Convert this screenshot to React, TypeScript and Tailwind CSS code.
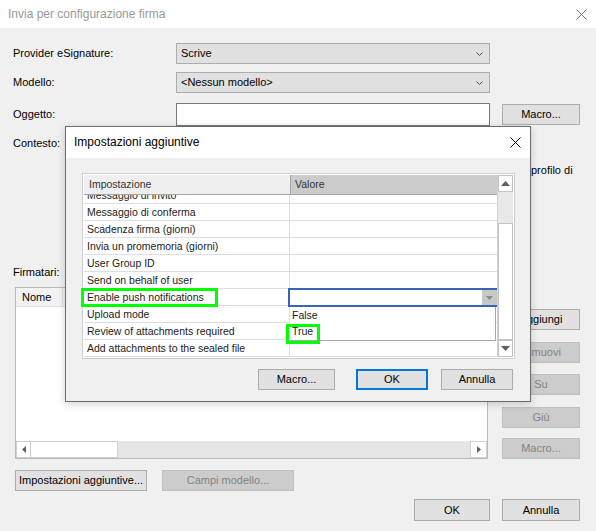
import React from "react";

function CloseX({ color }: { color: string }) {
  return (
    <svg width="11" height="11" viewBox="0 0 11 11">
      <path d="M0.5 0.5 L10.5 10.5 M10.5 0.5 L0.5 10.5" stroke={color} strokeWidth="1" fill="none" />
    </svg>
  );
}

function Tri({ dir }: { dir: "up" | "down" | "left" | "right" }) {
  if (dir === "up")
    return (
      <svg width="9" height="5" viewBox="0 0 9 5">
        <polygon points="0,5 4.5,0 9,5" fill="#606060" />
      </svg>
    );
  if (dir === "down")
    return (
      <svg width="9" height="5" viewBox="0 0 9 5">
        <polygon points="0,0 4.5,5 9,0" fill="#606060" />
      </svg>
    );
  if (dir === "left")
    return (
      <svg width="4" height="7" viewBox="0 0 4 7">
        <polygon points="4,0 0,3.5 4,7" fill="#606060" />
      </svg>
    );
  return (
    <svg width="4" height="7" viewBox="0 0 4 7">
      <polygon points="0,0 4,3.5 0,7" fill="#606060" />
    </svg>
  );
}

function Btn({
  children,
  className = "",
  disabled = false,
  primary = false,
}: {
  children: React.ReactNode;
  className?: string;
  disabled?: boolean;
  primary?: boolean;
}) {
  const look = disabled
    ? "bg-[#cccccc] border border-[#bfbfbf] text-[#838383]"
    : primary
    ? "bg-[#e1e1e1] border-2 border-[#0078d7] text-black"
    : "bg-[#e1e1e1] border border-[#adadad] text-black";
  return (
    <div className={`h-[21px] flex items-center justify-center shrink-0 whitespace-nowrap ${look} ${className}`}>
      {children}
    </div>
  );
}

function Combo({ text }: { text: string }) {
  return (
    <div className="w-[314px] h-[21px] bg-[#e1e1e1] border border-[#adadad] flex items-center justify-between pl-[4px] pr-[6px]">
      <span>{text}</span>
      <svg width="7" height="4" viewBox="0 0 7 4">
        <path d="M0.5 0.5 L3.5 3.5 L6.5 0.5" stroke="#4a4a4a" strokeWidth="1" fill="none" />
      </svg>
    </div>
  );
}

const rows = [
  "Messaggio di conferma",
  "Scadenza firma (giorni)",
  "Invia un promemoria (giorni)",
  "User Group ID",
  "Send on behalf of user",
  "Enable push notifications",
  "Upload mode",
  "Review of attachments required",
  "Add attachments to the sealed file",
];

function GridRow({ text }: { text: string }) {
  const isPush = text === "Enable push notifications";
  return (
    <div className="h-[17px] flex border-b border-[#dedede] relative shrink-0">
      <div className="w-[206px] border-r border-[#dedede] pl-[3px] flex items-center relative">
        {text}
        {isPush && (
          <div className="absolute left-[-3px] top-[-1px] w-[137px] h-[19px] border-[3px] border-[#00ff00]" />
        )}
      </div>
      <div className="flex-1 relative">
        {isPush && (
          <>
            <div className="absolute left-[-2px] top-[-1px] w-[209px] h-[19px] border-y-2 border-l-2 border-[#3466b3] bg-white flex justify-end z-10">
              <div className="w-[15px] bg-[#c8c8c8] flex items-center justify-center">
                <svg width="7" height="4" viewBox="0 0 7 4">
                  <polygon points="0,0 3.5,4 7,0" fill="#8a8a8a" />
                </svg>
              </div>
            </div>
            <div className="absolute left-0 top-[18px] w-[206px] h-[34px] bg-white border-r border-b border-[#a8a8a8] z-10 flex flex-col">
              <div className="h-[17px] pl-[2px] flex items-center">False</div>
              <div className="h-[17px] pl-[2px] flex items-center relative">
                True
                <div className="absolute left-[-4px] top-0 w-[34px] h-[20px] border-[3px] border-[#00ff00]" />
              </div>
            </div>
          </>
        )}
      </div>
    </div>
  );
}

export default function App() {
  return (
    <div className="relative w-[596px] h-[531px] overflow-hidden bg-[#f0f0f0] text-[11px] leading-[13px] text-black font-['Liberation_Sans',Arial,sans-serif]">
      {/* title bar */}
      <div className="h-[28px] bg-white flex items-center justify-between pl-[8px] pr-[9px]">
        <span className="text-[12px] text-[#999999]">Invia per configurazione firma</span>
        <CloseX color="#7a7a7a" />
      </div>

      <div className="pl-[13px] pr-[16px] pt-[15px]">
        <div className="flex items-center h-[21px]">
          <span className="w-[163px] shrink-0">Provider eSignature:</span>
          <Combo text="Scrive" />
        </div>
        <div className="flex items-center h-[21px] mt-[8px]">
          <span className="w-[163px] shrink-0">Modello:</span>
          <Combo text="<Nessun modello>" />
        </div>
        <div className="flex items-center h-[23px] mt-[10px]">
          <span className="w-[163px] shrink-0">Oggetto:</span>
          <div className="w-[314px] h-[23px] bg-white border border-[#7a7a7a]" />
          <Btn className="ml-[12px] w-[78px]">Macro...</Btn>
        </div>
        <div className="flex items-start h-[123px] mt-[10px]">
          <span className="w-[163px] shrink-0 h-[14px] leading-[14px]">Contesto:</span>
          <div className="w-[314px] h-[110px] bg-white border border-[#7a7a7a] mt-[-3px] shrink-0" />
          <div className="ml-[12px] w-[78px] pl-[29px] pt-[27px] whitespace-nowrap leading-[14px]">profilo di</div>
        </div>
        <div className="mt-[6px] h-[14px] leading-[14px]">Firmatari:</div>

        <div className="mt-[8px] flex items-start">
          <div className="ml-[2px] w-[473px] h-[172px] border border-[#b9b9b9] bg-white flex flex-col">
            <div className="h-[19px] flex bg-[#f2f2f2] border-b border-[#e0e0e0] shrink-0">
              <div className="w-[47px] border-r border-[#e0e0e0] pl-[6px] flex items-center">Nome</div>
            </div>
            <div className="flex-1" />
            <div className="h-[17px] flex shrink-0">
              <div className="w-[15px] bg-white border border-[#d0d0d0] flex items-center justify-center">
                <Tri dir="left" />
              </div>
              <div className="w-[87px] bg-white border-y border-r border-[#d0d0d0]" />
              <div className="flex-1 bg-[#e6e6e6]" />
              <div className="w-[17px] bg-white border border-[#d0d0d0] flex items-center justify-center">
                <Tri dir="right" />
              </div>
            </div>
          </div>
          <div className="ml-[14px] w-[78px] flex flex-col pt-[22px]">
            <Btn className="w-[78px]">Aggiungi</Btn>
            <Btn className="w-[78px] mt-[12px]" disabled>
              Rimuovi
            </Btn>
            <Btn className="w-[78px] mt-[11px]" disabled>
              Su
            </Btn>
            <Btn className="w-[78px] mt-[12px]" disabled>
              Giù
            </Btn>
            <Btn className="w-[78px] mt-[10px]" disabled>
              Macro...
            </Btn>
          </div>
        </div>

        <div className="mt-[11px] flex">
          <Btn className="ml-[2px] w-[132px]">Impostazioni aggiuntive...</Btn>
          <Btn className="ml-[15px] w-[132px]" disabled>
            Campi modello...
          </Btn>
        </div>
        <div className="mt-[8px] flex justify-end">
          <Btn className="w-[76px] h-[22px]">OK</Btn>
          <Btn className="ml-[12px] w-[78px] h-[22px]">Annulla</Btn>
        </div>
      </div>

      {/* modal dialog */}
      <div className="absolute left-[65px] top-[126px] w-[466px] h-[276px] border border-[#6b6b6b] bg-[#f0f0f0] flex flex-col shadow-[0_2px_8px_rgba(0,0,0,0.18)]">
        <div className="h-[31px] bg-white flex items-center justify-between pl-[8px] pr-[9px] shrink-0">
          <span className="text-[12px]">Impostazioni aggiuntive</span>
          <CloseX color="#000000" />
        </div>
        <div className="pl-[16px] pt-[15px]">
          <div className="w-[433px] h-[186px] border border-[#d0d0d0] p-px bg-white flex text-[10.5px] text-[#222222]">
            <div className="w-[413px] flex flex-col">
              <div className="h-[20px] flex border-b border-[#a5a5a5] shrink-0 text-[#333333]">
                <div className="w-[206px] bg-[#efefef] pl-[5px] flex items-center">Impostazione</div>
                <div className="flex-1 bg-[#cbcbcb] border-l border-[#a5a5a5] pl-[4px] flex items-center">Valore</div>
              </div>
              <div className="h-[9px] flex border-b border-[#dedede] shrink-0 overflow-hidden">
                <div className="w-[206px] border-r border-[#dedede] flex flex-col overflow-hidden">
                  <div className="h-[17px] shrink-0 mt-[-8px] pl-[3px] flex items-center">Messaggio di invito</div>
                </div>
                <div className="flex-1" />
              </div>
              {rows.map((r) => (
                <GridRow key={r} text={r} />
              ))}
            </div>
            <div className="w-[16px] flex flex-col border-l border-[#d0d0d0]">
              <div className="h-[17px] bg-white border border-[#c3c3c3] flex items-center justify-center">
                <Tri dir="up" />
              </div>
              <div className="h-[31px] bg-[#e8e8e8]" />
              <div className="h-[117px] bg-white border border-[#c3c3c3]" />
              <div className="h-[17px] bg-white border border-[#c3c3c3] flex items-center justify-center">
                <Tri dir="down" />
              </div>
            </div>
          </div>
          <div className="flex justify-end pr-[17px] mt-[10px]">
            <Btn className="w-[77px]">Macro...</Btn>
            <Btn className="ml-[21px] w-[72px]" primary>
              OK
            </Btn>
            <Btn className="ml-[13px] w-[72px]">Annulla</Btn>
          </div>
        </div>
      </div>
    </div>
  );
}
